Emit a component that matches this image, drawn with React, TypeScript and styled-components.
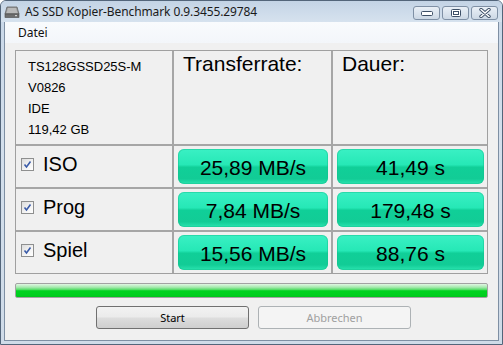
import React from 'react';
import styled, { createGlobalStyle } from 'styled-components';

const GlobalStyle = createGlobalStyle`
  html, body {
    margin: 0;
    padding: 0;
    background: #ffffff;
  }
  body {
    font-family: 'Noto Sans', 'Liberation Sans', sans-serif;
  }
`;

const Window = styled.div`
  width: 503px;
  height: 345px;
  box-sizing: border-box;
  display: flex;
  flex-direction: column;
  background: linear-gradient(180deg, #c8d7e8 0%, #d3dfec 40%, #cfdbe8 100%);
  border: 1px solid #53657a;
  border-radius: 6px 6px 0 0;
  overflow: hidden;
`;

const TitleBar = styled.div`
  height: 21px;
  display: flex;
  align-items: center;
  padding: 0 4px 0 3px;
  flex-shrink: 0;
  background: linear-gradient(180deg, #c3d3e5 0%, #cddbea 50%, #d6e2ee 100%);
`;

const TitleText = styled.span`
  margin-left: 5px;
  font-size: 12px;
  color: #1a1a1a;
  letter-spacing: -0.1px;
  flex: 1;
  white-space: nowrap;
`;

const WinButtons = styled.div`
  display: flex;
  gap: 2px;
  margin-top: 3px;
`;

const WinButton = styled.div`
  width: 27px;
  height: 14px;
  box-sizing: border-box;
  border: 1px solid #7f90a5;
  border-radius: 3px;
  background: linear-gradient(180deg, #e9eff6 0%, #dbe4ee 50%, #ccd8e5 100%);
  display: flex;
  align-items: center;
  justify-content: center;
`;

const Client = styled.div`
  flex: 1;
  margin: 0 3px 3px 3px;
  border: 1px solid #7e8fa3;
  border-top: none;
  display: flex;
  flex-direction: column;
  background: #f0f0f0;
`;

const MenuBar = styled.div`
  height: 21px;
  display: flex;
  align-items: center;
  padding-left: 13px;
  font-size: 12px;
  color: #111;
  background: linear-gradient(180deg, #f9fbfd 0%, #f3f6fa 100%);
`;

const Content = styled.div`
  padding: 7px 0 0 10px;
  display: flex;
  flex-direction: column;
`;

const Table = styled.div`
  width: 473px;
  box-sizing: border-box;
  display: grid;
  grid-template-columns: 156px 157px 154px;
  grid-template-rows: 93px 41px 41px 41px;
  gap: 2px;
  background: #a6a6a6;
  border: 1px solid #a0a0a0;
`;

const Cell = styled.div`
  background: #f0f0f0;
  box-sizing: border-box;
`;

const InfoCell = styled(Cell)`
  padding: 5px 0 0 12px;
  font-family: 'Liberation Sans', Arial, sans-serif;
  font-size: 13px;
  line-height: 21px;
  color: #000;
`;

const HeadCell = styled(Cell)`
  padding: 1px 0 0 9px;
  font-family: 'Liberation Sans', Arial, sans-serif;
  font-size: 21px;
  line-height: 24px;
  color: #000;
`;

const LabelCell = styled(Cell)`
  display: flex;
  align-items: center;
  padding: 0 0 4px 5px;
  gap: 9px;
  font-family: 'Liberation Sans', Arial, sans-serif;
  font-size: 20px;
  color: #000;
`;

const Check = styled.div`
  width: 13px;
  height: 13px;
  box-sizing: border-box;
  border: 1px solid #8e8f8f;
  background: linear-gradient(135deg, #dcdcdc 0%, #f4f4f4 60%, #ffffff 100%);
  display: flex;
  align-items: center;
  justify-content: center;
`;

const ValueCell = styled(Cell)`
  padding: 3px 3px 3px 4px;
  display: flex;
`;

const ValueBox = styled.div`
  flex: 1;
  border-radius: 6px;
  background: linear-gradient(
    180deg,
    #3af0c4 0%,
    #26e8b6 45%,
    #10cf98 52%,
    #12cc96 85%,
    #2ae4b0 100%
  );
  box-shadow: inset 0 0 0 1px rgba(20, 190, 140, 0.45);
  display: flex;
  align-items: center;
  justify-content: center;
  padding-top: 3px;
  box-sizing: border-box;
  font-family: 'Liberation Sans', Arial, sans-serif;
  font-size: 21px;
  color: #000;
`;

const Progress = styled.div`
  margin-top: 9px;
  width: 473px;
  height: 15px;
  box-sizing: border-box;
  border: 1px solid #a3a3a3;
  border-radius: 2px;
  background: linear-gradient(
    180deg,
    #e2f6e4 0%,
    #a6eaae 25%,
    #4fdc62 45%,
    #00d320 52%,
    #00cf1f 85%,
    #00c41c 100%
  );
`;

const ButtonRow = styled.div`
  margin-top: 8px;
  padding-left: 81px;
  display: flex;
  gap: 9px;
`;

const Button = styled.div<{ disabled?: boolean }>`
  width: 153px;
  height: 23px;
  box-sizing: border-box;
  border-radius: 3px;
  border: 1px solid ${p => (p.disabled ? '#adb2b5' : '#707070')};
  background: ${p =>
    p.disabled
      ? '#f4f4f4'
      : 'linear-gradient(180deg, #f2f2f2 0%, #ebebeb 48%, #dddddd 52%, #cfcfcf 100%)'};
  color: ${p => (p.disabled ? '#a0a0a0' : '#000')};
  font-size: 11px;
  display: flex;
  align-items: center;
  justify-content: center;
`;

const DriveIcon = () => (
  <svg width="16" height="15" viewBox="0 0 16 15">
    <path d="M3 3 L13 3 L15 10 L1 10 Z" fill="#9a9a9a" stroke="#5f5f5f" strokeWidth="0.8" />
    <path d="M4 4 L12 4 L13.5 9 L2.5 9 Z" fill="#b9b9b9" />
    <rect x="1" y="10" width="14" height="3.5" fill="#6e6e6e" stroke="#4a4a4a" strokeWidth="0.6" />
    <rect x="11" y="11" width="2" height="1.2" fill="#cfcfcf" />
  </svg>
);

const CheckMark = () => (
  <svg width="9" height="9" viewBox="0 0 9 9">
    <path d="M1.5 4.5 L3.5 7 L7.5 1.5" fill="none" stroke="#3a5ba8" strokeWidth="1.6" />
  </svg>
);

const rows = [
  { name: 'ISO', rate: '25,89 MB/s', time: '41,49 s' },
  { name: 'Prog', rate: '7,84 MB/s', time: '179,48 s' },
  { name: 'Spiel', rate: '15,56 MB/s', time: '88,76 s' },
];

const App: React.FC = () => (
  <>
    <GlobalStyle />
    <Window>
      <TitleBar>
        <DriveIcon />
        <TitleText>AS SSD Kopier-Benchmark 0.9.3455.29784</TitleText>
        <WinButtons>
          <WinButton>
            <svg width="12" height="6" viewBox="0 0 12 6">
              <rect x="0.5" y="1.5" width="11" height="4" rx="1" fill="#fff" stroke="#3d4f66" />
            </svg>
          </WinButton>
          <WinButton>
            <svg width="10" height="8" viewBox="0 0 10 8">
              <rect x="0.5" y="0.5" width="9" height="7" rx="1" fill="#fff" stroke="#3d4f66" />
              <rect x="2.5" y="2.5" width="5" height="3" fill="none" stroke="#3d4f66" />
            </svg>
          </WinButton>
          <WinButton>
            <svg width="12" height="10" viewBox="0 0 12 10">
              <path d="M2 1.5 L10 8.5 M10 1.5 L2 8.5" stroke="#3d4f66" strokeWidth="3.4" strokeLinecap="round" />
              <path d="M2 1.5 L10 8.5 M10 1.5 L2 8.5" stroke="#fff" strokeWidth="1.6" strokeLinecap="round" />
            </svg>
          </WinButton>
        </WinButtons>
      </TitleBar>
      <Client>
        <MenuBar>Datei</MenuBar>
        <Content>
          <Table>
            <InfoCell>
              <div>TS128GSSD25S-M</div>
              <div>V0826</div>
              <div>IDE</div>
              <div>119,42 GB</div>
            </InfoCell>
            <HeadCell>Transferrate:</HeadCell>
            <HeadCell>Dauer:</HeadCell>
            {rows.map(r => (
              <React.Fragment key={r.name}>
                <LabelCell>
                  <Check>
                    <CheckMark />
                  </Check>
                  <span>{r.name}</span>
                </LabelCell>
                <ValueCell>
                  <ValueBox>{r.rate}</ValueBox>
                </ValueCell>
                <ValueCell>
                  <ValueBox>{r.time}</ValueBox>
                </ValueCell>
              </React.Fragment>
            ))}
          </Table>
          <Progress />
          <ButtonRow>
            <Button>Start</Button>
            <Button disabled>Abbrechen</Button>
          </ButtonRow>
        </Content>
      </Client>
    </Window>
  </>
);

export default App;
